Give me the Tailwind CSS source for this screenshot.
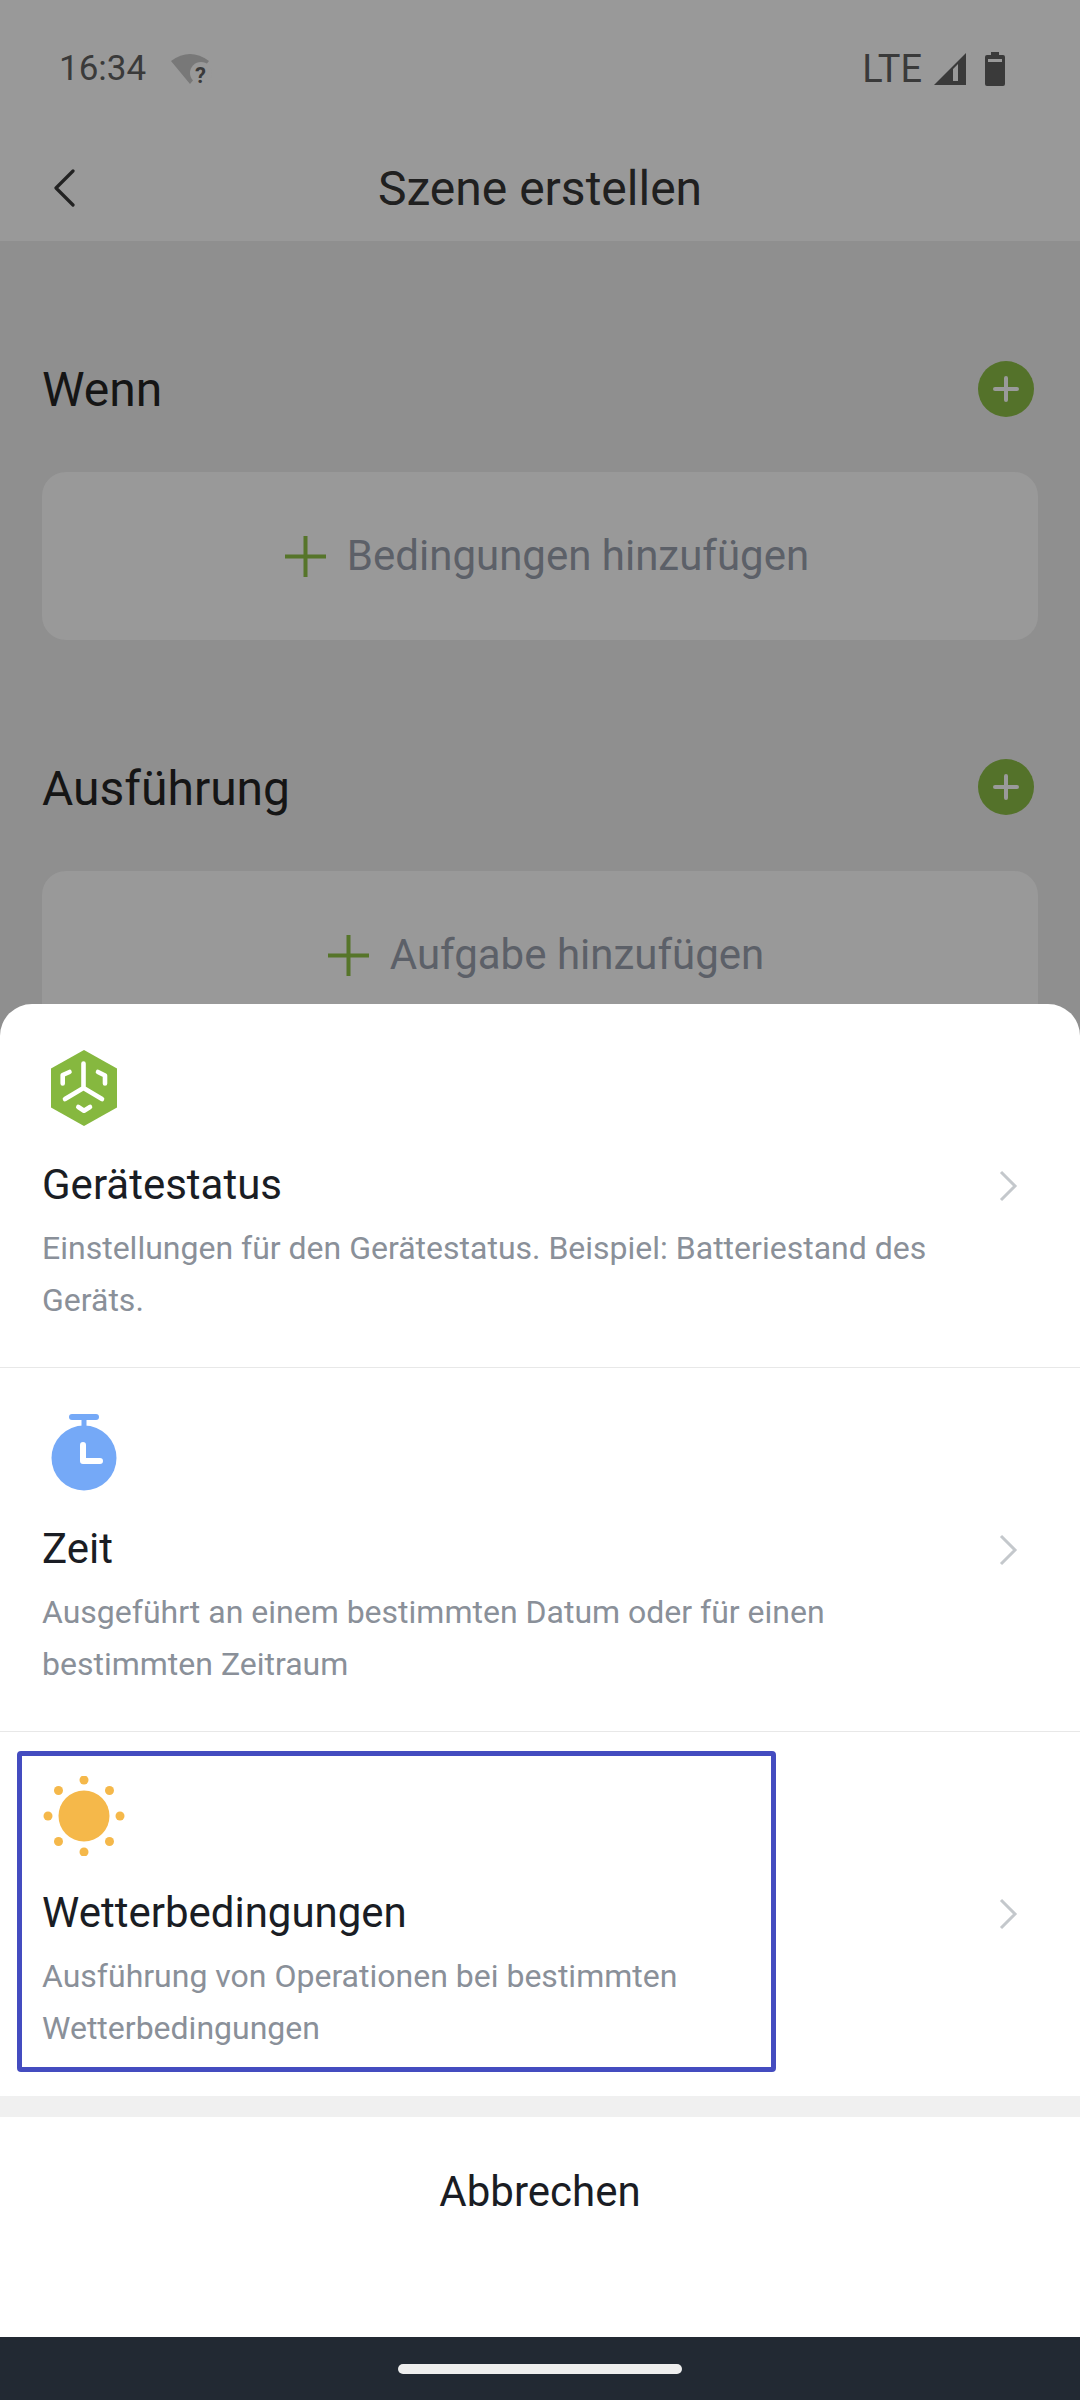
<!DOCTYPE html>
<html lang="de">
<head>
    <meta charset="UTF-8">
    <meta name="viewport" content="width=device-width, initial-scale=1.0">
    <title>Szene erstellen</title>
    <script src="https://cdn.jsdelivr.net/npm/@tailwindcss/browser@4"></script>
</head>
<body class="relative w-[1080px] h-[2400px] overflow-hidden bg-[#8f8f8f] font-['Roboto',sans-serif]">
    <!-- Header -->
    <header class="bg-[#999999] h-[241px]">
        <div class="h-[137px] flex items-center justify-between pl-[59px] pr-[75px]">
            <div class="flex items-center gap-[25px]">
                <span class="text-[35px] leading-none text-[#3a3a3a]">16:34</span>
                <svg class="w-[42px] h-[40px]" viewBox="0 0 42 40">
                    <path d="M0 12 Q19 -2 38 12 L19 35 Z" fill="#787878"/>
                    <circle cx="30" cy="24" r="11" fill="#999999"/>
                    <text x="24" y="34" font-size="22" font-weight="700" fill="#3a3a3a">?</text>
                </svg>
            </div>
            <div class="flex items-center gap-[12px]">
                <span class="text-[38px] leading-none text-[#3a3a3a]">LTE</span>
                <svg class="w-[32px] h-[32px]" viewBox="0 0 32 32"><path fill-rule="evenodd" d="M32 0 V32 H0 Z M24 11 L19 16 V28 H24 Z" fill="#3a3a3a"/></svg>
                <svg class="ml-[7px] w-[20px] h-[34px]" viewBox="0 0 20 34"><path fill-rule="evenodd" d="M6 0 H14 V3 H18 Q20 3 20 5 V32 Q20 34 18 34 H2 Q0 34 0 32 V5 Q0 3 2 3 H6 Z M3 7 V10 H17 V7 Z" fill="#3a3a3a"/></svg>
            </div>
        </div>
        <div class="relative h-[104px] flex items-center justify-center">
            <svg class="absolute left-[52px] top-[32px] w-[24px] h-[38px]" viewBox="0 0 24 38" fill="none"><path d="M21 2 L4 19 L21 36" stroke="#222222" stroke-width="3.2" stroke-linecap="round" stroke-linejoin="round"/></svg>
            <h1 class="text-[48px] leading-none text-[#202020]">Szene erstellen</h1>
        </div>
    </header>

    <!-- Scene form behind the sheet -->
    <main class="px-[42px] pt-[117px]">
        <section>
            <div class="flex items-center justify-between h-[64px] pr-[4px]">
                <h2 class="text-[48px] leading-none text-[#151515]">Wenn</h2>
                <span class="w-[56px] h-[56px] -mt-[2px] rounded-full bg-[#54722a] flex items-center justify-center">
                    <svg class="w-[26px] h-[26px]" viewBox="0 0 26 26"><path d="M13 2 V24 M2 13 H24" stroke="#9a9a9a" stroke-width="4" stroke-linecap="round"/></svg>
                </span>
            </div>
            <div class="mt-[50px] h-[168px] pl-[14px] rounded-[24px] bg-[#999999] flex items-center justify-center gap-[21px]">
                <svg class="w-[41px] h-[41px]" viewBox="0 0 41 41"><path d="M20.5 0 V41 M0 20.5 H41" stroke="#56752a" stroke-width="4"/></svg>
                <span class="text-[42px] leading-none text-[#5c6068]">Bedingungen hinzufügen</span>
            </div>
        </section>
        <section class="mt-[116px]">
            <div class="flex items-center justify-between h-[64px] pr-[4px]">
                <h2 class="text-[48px] leading-none text-[#151515] mt-[2px]">Ausführung</h2>
                <span class="w-[56px] h-[56px] -mt-[2px] rounded-full bg-[#54722a] flex items-center justify-center">
                    <svg class="w-[26px] h-[26px]" viewBox="0 0 26 26"><path d="M13 2 V24 M2 13 H24" stroke="#9a9a9a" stroke-width="4" stroke-linecap="round"/></svg>
                </span>
            </div>
            <div class="mt-[51px] h-[168px] pl-[12px] rounded-[24px] bg-[#999999] flex items-center justify-center gap-[21px]">
                <svg class="w-[41px] h-[41px]" viewBox="0 0 41 41"><path d="M20.5 0 V41 M0 20.5 H41" stroke="#56752a" stroke-width="4"/></svg>
                <span class="text-[42px] leading-none text-[#5c6068]">Aufgabe hinzufügen</span>
            </div>
        </section>
    </main>

    <!-- Bottom sheet -->
    <div class="absolute left-0 right-0 top-[1004px] bg-white rounded-t-[32px]">
        <div class="h-[364px] pt-[44px] pl-[42px] pr-[62px] border-b border-[#e8e8e8] flex justify-between">
            <div class="w-[900px]">
                <svg class="w-[84px] h-[80px]" viewBox="0 0 84 80">
                    <path d="M42 2 L75 20.5 V59.5 L42 78 L9 59.5 V20.5 Z" fill="#86b83f"/>
                    <g fill="none" stroke="#ffffff" stroke-width="4.6" stroke-linecap="round" stroke-linejoin="round">
                        <path d="M41.5 15.5 V40 M41.5 40 L23 51 M41.5 40 L60 51"/>
                        <path d="M27.5 24 L20.7 27 V35.5"/>
                        <path d="M56 24 L63 27.5 V35.5"/>
                        <path d="M36.3 59 L42 62.7 L48 59"/>
                    </g>
                </svg>
                <h3 class="mt-[33px] text-[42px] leading-[48px] text-[#1a1d24]">Gerätestatus</h3>
                <p class="mt-[13px] text-[32px] leading-[52px] text-[#8a9099]">Einstellungen für den Gerätestatus. Beispiel: Batteriestand des Geräts.</p>
            </div>
            <svg class="mt-[122px] w-[20px] h-[32px]" viewBox="0 0 20 32" fill="none"><path d="M3 2 L17 16 L3 30" stroke="#c4c8cc" stroke-width="3"/></svg>
        </div>
        <div class="h-[364px] pt-[44px] pl-[42px] pr-[62px] border-b border-[#e8e8e8] flex justify-between">
            <div class="w-[900px]">
                <svg class="w-[84px] h-[80px]" viewBox="0 0 84 80">
                    <path d="M30 5 H54" stroke="#75a9f7" stroke-width="6" stroke-linecap="round"/>
                    <path d="M42 5 V16" stroke="#75a9f7" stroke-width="5"/>
                    <circle cx="42" cy="46" r="32.5" fill="#75a9f7"/>
                    <path d="M41 33 V49 H58" fill="none" stroke="#ffffff" stroke-width="6" stroke-linecap="round" stroke-linejoin="round"/>
                </svg>
                <h3 class="mt-[33px] text-[42px] leading-[48px] text-[#1a1d24]">Zeit</h3>
                <p class="mt-[13px] text-[32px] leading-[52px] text-[#8a9099]">Ausgeführt an einem bestimmten Datum oder für einen bestimmten Zeitraum</p>
            </div>
            <svg class="mt-[122px] w-[20px] h-[32px]" viewBox="0 0 20 32" fill="none"><path d="M3 2 L17 16 L3 30" stroke="#c4c8cc" stroke-width="3"/></svg>
        </div>
        <div class="relative h-[364px] pt-[44px] pl-[42px] pr-[62px] flex justify-between">
            <div class="w-[900px]">
                <svg class="w-[84px] h-[80px]" viewBox="0 0 84 80" fill="#f5b84a">
                    <circle cx="42" cy="40" r="25.5"/>
                    <circle cx="42" cy="4" r="4.5"/><circle cx="42" cy="76" r="4.5"/>
                    <circle cx="6" cy="40" r="4.5"/><circle cx="78" cy="40" r="4.5"/>
                    <circle cx="16.5" cy="14.5" r="4.5"/><circle cx="67.5" cy="14.5" r="4.5"/>
                    <circle cx="16.5" cy="65.5" r="4.5"/><circle cx="67.5" cy="65.5" r="4.5"/>
                </svg>
                <h3 class="mt-[33px] text-[42px] leading-[48px] text-[#1a1d24]">Wetterbedingungen</h3>
                <p class="mt-[13px] w-[720px] text-[32px] leading-[52px] text-[#8a9099]">Ausführung von Operationen bei bestimmten Wetterbedingungen</p>
            </div>
            <svg class="mt-[122px] w-[20px] h-[32px]" viewBox="0 0 20 32" fill="none"><path d="M3 2 L17 16 L3 30" stroke="#c4c8cc" stroke-width="3"/></svg>
            <div class="absolute left-[17px] top-[19px] w-[759px] h-[321px] border-[5px] border-[#444cc0] rounded-[4px]"></div>
        </div>
        <div class="h-[21px] bg-[#f0f0f0]"></div>
        <div class="h-[220px] pb-[70px] flex items-center justify-center">
            <span class="text-[42px] leading-none text-[#1a1d24]">Abbrechen</span>
        </div>
        <div class="h-[63px] bg-[#222933] flex items-start justify-center pt-[27px]">
            <div class="w-[284px] h-[10px] rounded-full bg-[#eeeeee]"></div>
        </div>
    </div>
</body>
</html>
